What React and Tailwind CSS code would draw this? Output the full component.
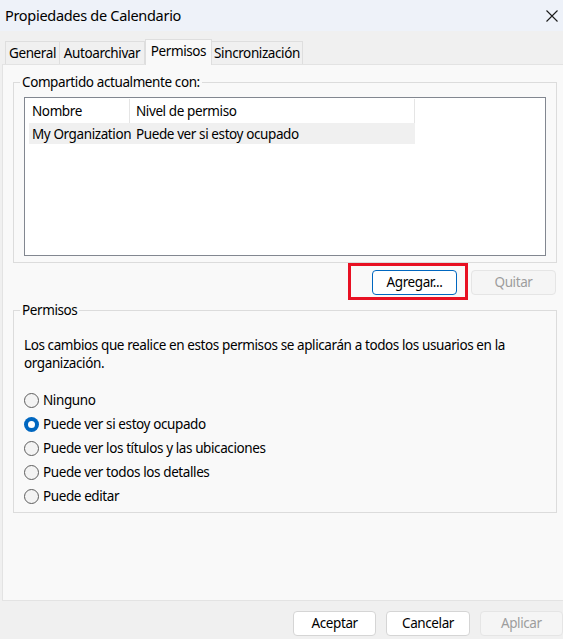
import React from "react";

const font = { fontFamily: '"Noto Sans", "Open Sans", sans-serif', letterSpacing: "-0.4px" };

function Radio({ checked, label }) {
  return (
    <div className="flex items-center h-[24px]">
      {checked ? (
        <span className="w-[15px] h-[15px] rounded-full bg-[#0067c0] flex items-center justify-center">
          <span className="w-[7px] h-[7px] rounded-full bg-white" />
        </span>
      ) : (
        <span className="w-[15px] h-[15px] rounded-full border border-[#5e5e5e] bg-[#f3f3f3]" />
      )}
      <span className="ml-[4px] text-[13.5px] text-black">{label}</span>
    </div>
  );
}

function Btn({ children, primary, disabled, className = "" }) {
  const base = "h-[25px] w-[85px] rounded-[4px] text-[13.5px] flex items-center justify-center";
  const look = disabled
    ? "bg-[#f5f5f5] border border-[#e5e5e5] text-[#9d9d9d]"
    : primary
    ? "bg-white border border-[#0067c0] text-black"
    : "bg-white border border-[#d5d5d5] text-black";
  return <div className={`${base} ${look} ${className}`}>{children}</div>;
}

export default function App() {
  return (
    <div className="w-[563px] h-[639px] bg-[#f0f0f0] flex flex-col overflow-hidden" style={font}>
      {/* Title bar */}
      <div className="h-[31px] bg-[#eef2f9] flex items-center justify-between pl-[5px] pr-[5px] shrink-0">
        <span className="text-[14.5px] text-black tracking-[-0.3px]">Propiedades de Calendario</span>
        <svg width="12" height="12" viewBox="0 0 12 12">
          <path d="M0.5 0.5 L11.5 11.5 M11.5 0.5 L0.5 11.5" stroke="#1a1a1a" strokeWidth="1.1" />
        </svg>
      </div>

      {/* Tabs */}
      <div className="h-[33px] flex items-end pl-[5px] shrink-0 relative z-10">
        <div className="h-[23px] w-[55px] border border-b-0 border-[#dedede] flex items-center justify-center text-[13.5px] text-black">General</div>
        <div className="h-[23px] w-[85px] border border-b-0 border-l-0 border-[#dedede] flex items-center justify-center text-[13.5px] text-black">Autoarchivar</div>
        <div className="h-[26px] w-[67px] -mb-px bg-[#f9f9f9] border border-b-0 border-[#dedede] flex items-start pt-[1px] justify-center text-[13.5px] text-black">Permisos</div>
        <div className="h-[23px] w-[91px] border border-b-0 border-l-0 border-[#dedede] flex items-center justify-center text-[13.5px] text-black">Sincronización</div>
      </div>

      {/* Panel */}
      <div className="ml-[2px] w-[566px] h-[537px] bg-[#f9f9f9] border border-[#e3e3e3] shrink-0 flex flex-col">
        <fieldset className="mt-[7px] mx-[10px] border border-[#dcdcdc] px-[10px] pb-[6px]">
          <legend className="ml-[-4px] px-[2px] text-[13.5px] leading-[20px] text-black">Compartido actualmente con:</legend>
          <div className="mt-[5px] h-[159px] bg-white border border-[#828790]">
            <div className="flex h-[25px] pt-[1px] text-[13.5px] text-black">
              <div className="w-[105px] pl-[7px] flex items-center border-r border-[#e5e5e5]">Nombre</div>
              <div className="w-[285px] pl-[6px] flex items-center border-r border-[#e5e5e5]">Nivel de permiso</div>
            </div>
            <div className="flex h-[21px] ml-[4px] w-[386px] pt-[1px] bg-[#f0f0f0] text-[13.5px] text-black">
              <div className="w-[101px] pl-[3px] flex items-center whitespace-nowrap">My Organization</div>
              <div className="pl-[6px] flex items-center whitespace-nowrap">Puede ver si estoy ocupado</div>
            </div>
          </div>
        </fieldset>

        <div className="mt-[7px] flex justify-end pr-[11px] gap-[14px]">
          <div className="relative">
            <Btn primary>Agregar...</Btn>
            <div className="absolute left-[-24px] right-[-11px] top-[-7px] bottom-[-5px] border-[3px] border-[#e81123] pointer-events-none" />
          </div>
          <Btn disabled className="w-[84px]">Quitar</Btn>
        </div>

        <fieldset className="mt-[5px] mx-[10px] border border-[#dcdcdc] px-[10px] pb-[4px]">
          <legend className="ml-[-4px] px-[2px] text-[13.5px] leading-[20px] text-black">Permisos</legend>
          <p className="mt-[16px] text-[13.5px] leading-[18px] text-black whitespace-nowrap">
            Los cambios que realice en estos permisos se aplicarán a todos los usuarios en la
            <br />
            organización.
          </p>
          <div className="mt-[16px] flex flex-col">
            <Radio label="Ninguno" />
            <Radio checked label="Puede ver si estoy ocupado" />
            <Radio label="Puede ver los títulos y las ubicaciones" />
            <Radio label="Puede ver todos los detalles" />
            <Radio label="Puede editar" />
          </div>
        </fieldset>
      </div>

      {/* Bottom buttons */}
      <div className="mt-[10px] flex pl-[293px] gap-[10px] shrink-0">
        <Btn>Aceptar</Btn>
        <Btn>Cancelar</Btn>
        <Btn disabled>Aplicar</Btn>
      </div>
    </div>
  );
}
